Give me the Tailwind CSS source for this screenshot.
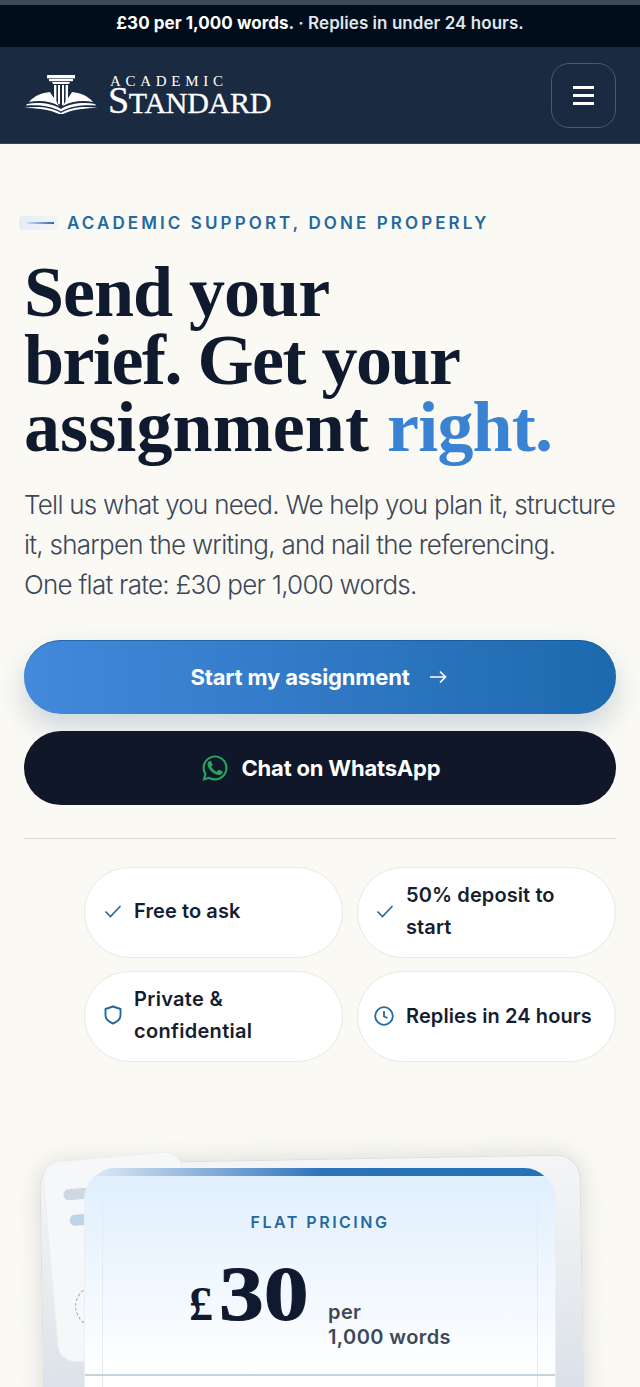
<!DOCTYPE html>
<html lang="en">
<head>
    <meta charset="UTF-8">
    <meta name="viewport" content="width=device-width, initial-scale=1.0">
    <title>Academic Standard</title>
    <script src="https://cdn.jsdelivr.net/npm/@tailwindcss/browser@4"></script>
</head>
<body class="bg-[#faf9f4] font-['Inter','Noto_Sans',sans-serif] text-[#101a2e]">
<div class="h-[1387px] overflow-hidden">
    <!-- top strip -->
    <div class="h-[5px] bg-[#3c4854]"></div>
    <div class="h-[42px] bg-[#020d1b] flex items-center justify-center pb-[4px] text-[17px] tracking-[0.05px] font-semibold text-[#f2f5f8]">
        <span class="font-bold text-white">£30 per 1,000 words.</span><span class="ml-1 text-[#dfe6ee]">· Replies in under 24 hours.</span>
    </div>

    <!-- nav -->
    <header class="h-[97px] bg-[#1a2a40] border-b border-[#3a4654] pl-6 pr-6 flex items-center justify-between">
        <div class="flex items-center gap-[9px] -ml-[1px]">
            <svg class="w-[76px] h-[40px] mt-[-2px]" viewBox="0 0 76 40" fill="#fff">
                <rect x="24" y="1" width="28" height="3.4"/>
                <rect x="26" y="5" width="24" height="2.2"/>
                <path d="M29 8h18l-1 2H30z"/>
                <path d="M31 11h2.4v18l-2.4-1.5zM35 11h2v19.5l-2-1zM39 11h2v19.5l-2 1zM42.6 11H45v16.5L42.6 29z"/>
                <path d="M27 18 C 19 19 12 21 6 28 C 16 26 28 27 36 32 C 33 26 29 22 27 18z"/>
                <path d="M49 18 C 57 19 64 21 70 28 C 60 26 48 27 40 32 C 43 26 47 22 49 18z"/>
                <path d="M4 30 C 15 28 29 29 38 35 C 47 29 61 28 72 30 L 73 31.5 C 61 30.5 47 32 38 37.5 C 29 32 15 30.5 3 31.5z"/>
                <path d="M1 34 C 14 32 28 33 38 39 C 48 33 62 32 75 34 C 62 34 48 35.5 38 41 C 28 35.5 14 34 1 34z"/>
            </svg>
            <div class="font-['Liberation_Serif',serif] text-white mt-[-10px]">
                <div class="text-[15px] tracking-[4.7px] h-[14px] leading-[14px] pl-[2px]">ACADEMIC</div>
                <div class="text-[30px] leading-[25px] h-[25px] -mt-[7px] tracking-[-0.3px] [-webkit-text-stroke:0.3px_#fff]"><span class="text-[38px] leading-none">S</span>TANDARD</div>
            </div>
        </div>
        <button class="w-[65px] h-[65px] rounded-[18px] border border-[#4c5a6e] flex flex-col items-center justify-center gap-[5px]">
            <span class="block w-[21px] h-[3px] bg-white"></span>
            <span class="block w-[21px] h-[3px] bg-white"></span>
            <span class="block w-[21px] h-[3px] bg-white"></span>
        </button>
    </header>

    <main class="px-6 relative">
        <!-- eyebrow -->
        <div class="pt-[67px] flex items-center gap-[8px] -ml-[5px]">
            <div class="w-[39px] h-[14px] bg-gradient-to-r from-[#e2edf8] to-[#f3f5f5] rounded-sm flex items-center justify-end pr-[4px]">
                <span class="block w-[27px] h-[2px] bg-gradient-to-r from-[#cfe0f2] to-[#1f6bb0]"></span>
            </div>
            <span class="text-[17px] leading-[24px] font-semibold tracking-[3.1px] text-[#23689f] ml-[1px] whitespace-nowrap">ACADEMIC SUPPORT, DONE PROPERLY</span>
        </div>

        <!-- headline -->
        <h1 class="mt-[24px] font-['Liberation_Serif',serif] font-bold text-[72px] leading-[67.5px] text-[#101a2e] whitespace-nowrap">
            <span class="tracking-[-1px]">Send your</span><br><span class="tracking-[-1.5px]">brief. Get your</span><br><span class="tracking-[0.1px]">assignment</span> <span class="text-[#3a82d2] tracking-[-0.8px]">right.</span>
        </h1>

        <p class="mt-[23.5px] text-[26px] leading-[40px] tracking-[-0.75px] text-[#3d4757] font-light whitespace-nowrap">
            Tell us what you need. We help you plan it, structure<br>it, sharpen the writing, and nail the referencing.<br>One flat rate: £30 per 1,000 words.
        </p>

        <!-- buttons -->
        <div class="mt-[35px] flex flex-col gap-[17px]">
            <a class="h-[74px] rounded-full bg-gradient-to-r from-[#4389dc] to-[#1c69ae] shadow-[0_14px_28px_rgba(30,80,120,0.2),inset_0_1px_0_rgba(20,80,140,0.6)] flex items-center justify-center gap-[19px] pr-[3px] text-white font-bold text-[22px] tracking-[-0.15px]">
                <span>Start my assignment</span>
                <svg class="w-[18px] h-[14px]" viewBox="0 0 18 14" fill="none" stroke="#fff" stroke-width="1.7"><path d="M1 7h15.5M11 1.5 16.5 7 11 12.5"/></svg>
            </a>
            <a class="h-[74px] rounded-full bg-[#0f1729] flex items-center justify-center gap-[12px] text-white font-bold text-[22px] tracking-[-0.2px]">
                <svg class="w-[30px] h-[30px]" viewBox="0 0 24 24" fill="#25a55f"><path d="M17.47 14.38c-.3-.15-1.75-.86-2.02-.96-.27-.1-.47-.15-.67.15-.2.3-.77.96-.94 1.16-.17.2-.35.22-.65.07-.3-.15-1.25-.46-2.38-1.47-.88-.79-1.48-1.76-1.65-2.06-.17-.3-.02-.46.13-.61.13-.13.3-.35.45-.52.15-.17.2-.3.3-.5.1-.2.05-.37-.03-.52-.07-.15-.67-1.61-.92-2.2-.24-.58-.49-.5-.67-.51h-.57c-.2 0-.52.07-.79.37-.27.3-1.04 1.02-1.04 2.48 0 1.46 1.07 2.88 1.21 3.08.15.2 2.1 3.2 5.08 4.49.71.3 1.26.49 1.7.62.71.23 1.36.2 1.87.12.57-.09 1.75-.72 2-1.41.25-.69.25-1.29.17-1.41-.07-.13-.27-.2-.57-.35zM12.05 2C6.55 2 2.08 6.47 2.08 11.97c0 1.76.46 3.47 1.33 4.98L2 22.1l5.27-1.38a9.93 9.93 0 0 0 4.77 1.22c5.5 0 9.97-4.47 9.97-9.97C22 6.47 17.55 2 12.05 2zm0 18.25a8.26 8.26 0 0 1-4.21-1.15l-.3-.18-3.13.82.84-3.05-.2-.31a8.24 8.24 0 0 1-1.27-4.41c0-4.57 3.72-8.28 8.29-8.28 4.56 0 8.26 3.71 8.26 8.28 0 4.57-3.72 8.28-8.28 8.28z"/></svg>
                <span>Chat on WhatsApp</span>
            </a>
        </div>

        <div class="mt-[33px] h-px bg-[#d8d9d6]"></div>

        <!-- feature pills -->
        <div class="mt-[28px] ml-[60px] grid grid-cols-[259px_259px] gap-x-[14px] gap-y-[13px] font-semibold text-[20px] leading-[32px] tracking-[0.1px] text-[#151e30]">
            <div class="h-[91px] rounded-[46px] bg-white border border-[#e8e8e4] flex items-center pl-[19px] pr-3 pb-[3px] gap-[12px]">
                <svg class="w-[18px] h-[14px] shrink-0" viewBox="0 0 18 14" fill="none" stroke="#23689f" stroke-width="1.6"><path d="M1.5 7.5 6.5 12.5 16.5 2"/></svg>
                <span>Free to ask</span>
            </div>
            <div class="h-[91px] rounded-[46px] bg-white border border-[#e8e8e4] flex items-center pl-[18px] pr-3 pb-[3px] gap-[12px]">
                <svg class="w-[18px] h-[14px] shrink-0" viewBox="0 0 18 14" fill="none" stroke="#23689f" stroke-width="1.6"><path d="M1.5 7.5 6.5 12.5 16.5 2"/></svg>
                <span>50% deposit to<br>start</span>
            </div>
            <div class="h-[91px] rounded-[46px] bg-white border border-[#e8e8e4] flex items-center pl-[19px] pr-3 pb-[3px] gap-[12px]">
                <svg class="w-[18px] h-[20px] shrink-0" viewBox="0 0 18 20" fill="none" stroke="#23689f" stroke-width="1.9" stroke-linejoin="round"><path d="M9 1.500 16.500 4v6c0 4.500-3.500 7-7.500 8.500C5 17 1.500 14.500 1.500 10V4z"/></svg>
                <span class="tracking-[0.3px]">Private &amp;<br>confidential</span>
            </div>
            <div class="h-[91px] rounded-[46px] bg-white border border-[#e8e8e4] flex items-center pl-[16px] pr-2 pb-[2px] gap-[12px]">
                <svg class="w-[20px] h-[20px] shrink-0" viewBox="0 0 20 20" fill="none" stroke="#23689f" stroke-width="1.8"><circle cx="10" cy="10" r="8.800"/><path d="M10 5v5.500l3.500 1.500"/></svg>
                <span class="whitespace-nowrap">Replies in 24 hours</span>
            </div>
        </div>

        <!-- pricing card stack -->
        <div class="relative mt-[84px] h-[260px]">
            <div class="absolute left-[18px] top-[13px] w-[541px] h-[320px] -rotate-[1deg] rounded-[24px] bg-gradient-to-b from-[#f4f5f6] via-[#e6eaee] via-[45%] to-[#cfd8e2] border border-[#dcdedd] shadow-[0_0_24px_rgba(120,125,130,0.24)]"></div>
            <div class="absolute left-[26px] top-[10px] w-[140px] h-[202px] -rotate-[5deg] rounded-[18px] bg-[#f6f7f9] border border-[#eceeef] overflow-hidden">
                <span class="absolute left-[18px] top-[28px] w-[40px] h-[11px] rounded-full bg-[#ced8e2]"></span>
                <span class="absolute left-[22px] top-[54px] w-[40px] h-[11px] rounded-full bg-[#bfd3e8]"></span>
                <span class="absolute left-[20px] top-[126px] w-[42px] h-[42px] rounded-full border border-dashed border-[#8f98a2]"></span>
            </div>
            <div class="absolute left-[60px] top-[22px] w-[472px] h-[260px] rounded-[32px] bg-gradient-to-b from-[#dfeefd] to-white to-[80%] overflow-hidden border-x border-[#e9eff5]">
                <div class="h-[8px] bg-gradient-to-r from-[#e4eef6] via-[#2b74bb] to-[#2570b8]"></div>
                <div class="absolute left-[17px] right-[17px] top-[28px] bottom-0 border-x border-[#e1ebf4]"></div>
                <div class="relative text-center text-[16px] font-semibold tracking-[2.5px] text-[#23689f] mt-[36px] leading-[20px]">FLAT PRICING</div>
                <div class="relative flex items-end mt-[30px] pl-[104px]">
                    <span class="font-['Liberation_Serif',serif] font-bold text-[48px] leading-[48px] mb-[2px] mr-[6px]">£</span>
                    <span class="font-['Liberation_Serif',serif] font-bold text-[78px] leading-[64px] mb-[4px] origin-left scale-x-[1.15] [-webkit-text-stroke:1px_#101a2e]">30</span>
                    <span class="ml-[31px] text-[20px] leading-[25px] font-semibold tracking-[0.4px] text-[#3f4858] mb-[-20px] whitespace-nowrap">per<br>1,000 words</span>
                </div>
                <div class="absolute left-0 right-0 top-[206px] h-[2px] bg-[#c4d2de]"></div>
            </div>
        </div>
    </main>
</div>
</body>
</html>
